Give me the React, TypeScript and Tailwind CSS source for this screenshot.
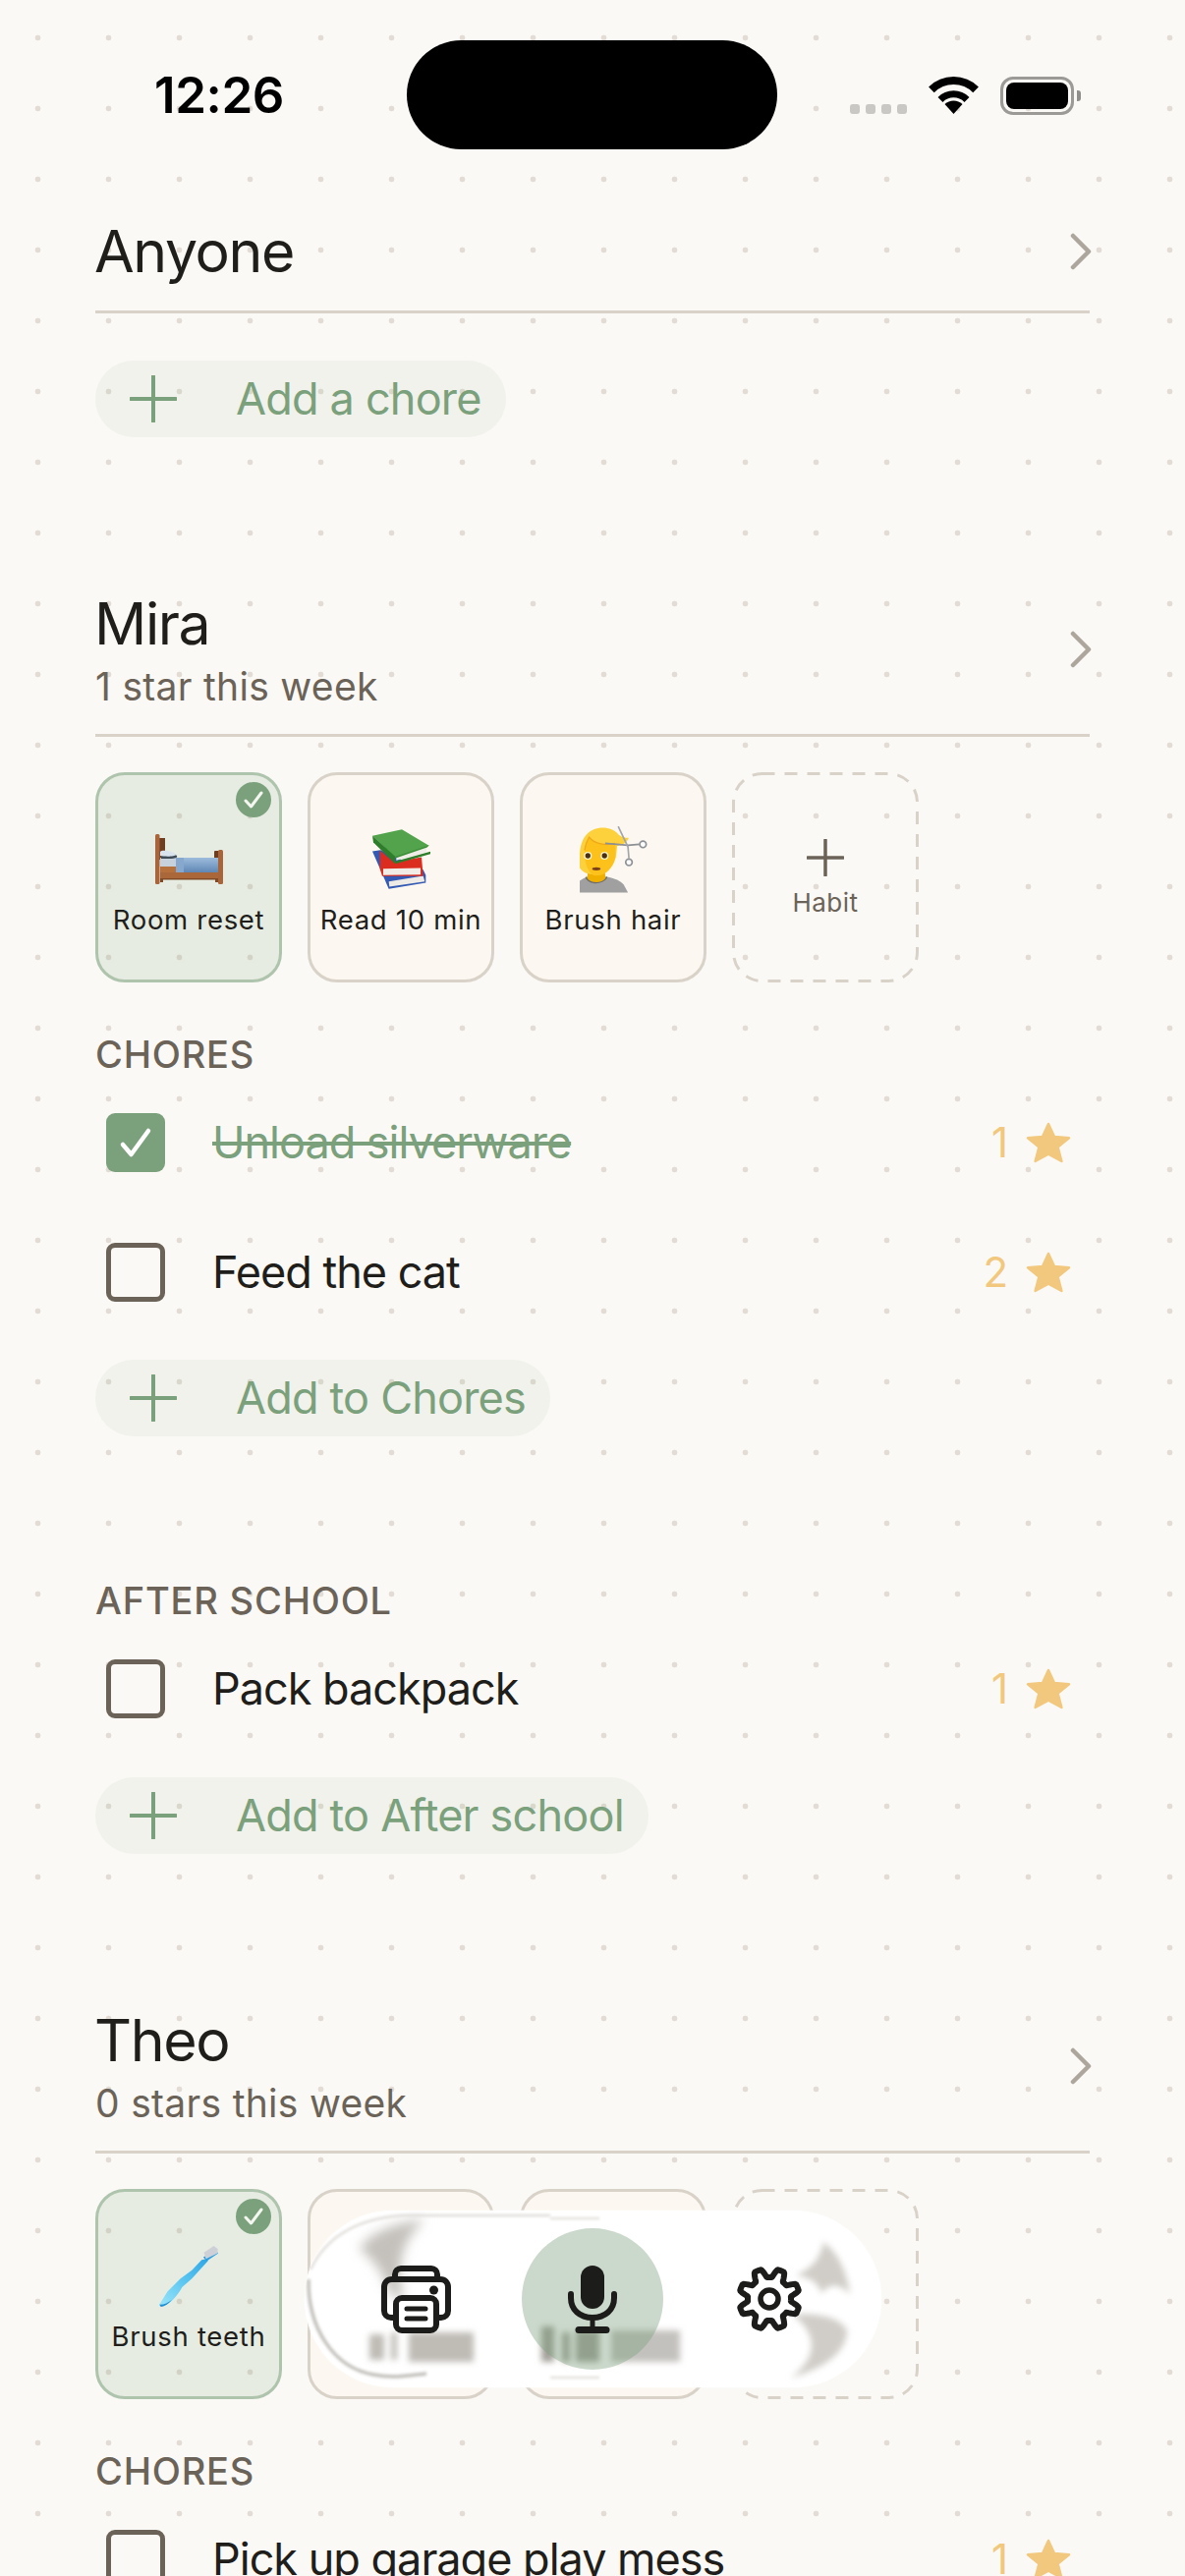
import React from "react";

const gearPath = (() => {
  const pts: string[] = [];
  const n = 240;
  for (let i = 0; i <= n; i++) {
    const t = (i / n) * Math.PI * 2;
    const c = Math.cos(8 * t + Math.PI);
    const s = Math.max(-1, Math.min(1, c * 1.7));
    const r = 26.5 + 4.5 * s;
    pts.push(`${(34 + r * Math.sin(t)).toFixed(2)} ${(34 - r * Math.cos(t)).toFixed(2)}`);
  }
  return "M" + pts.join("L") + "Z";
})();

function Plus({ size, stroke, color }: { size: number; stroke: number; color: string }) {
  return (
    <svg width={size} height={size} viewBox={`0 0 ${size} ${size}`} fill="none" className="shrink-0">
      <path d={`M${size / 2} 1V${size - 1}M1 ${size / 2}H${size - 1}`} stroke={color} strokeWidth={stroke} strokeLinecap="round" />
    </svg>
  );
}

function Chevron() {
  return (
    <svg width="24" height="38" viewBox="0 0 24 38" fill="none" className="mr-[-3px] shrink-0">
      <path d="M4 3L20 19L4 35" stroke="#aca69d" strokeWidth="4.5" strokeLinecap="round" strokeLinejoin="round" />
    </svg>
  );
}

function Star() {
  return (
    <svg width="46" height="42" viewBox="0 0 46 42" className="shrink-0">
      <path
        d="M23 2L29 15L44 16.2L32.6 25.6L36.4 40L23 32.6L9.6 40L13.4 25.6L2 16.2L17 15Z"
        fill="#f2c87e"
        stroke="#f2c87e"
        strokeWidth="2.5"
        strokeLinejoin="round"
      />
    </svg>
  );
}

function Bed() {
  return (
    <svg width="69" height="52" viewBox="0 0 69 52">
      <defs>
        <linearGradient id="blanket" x1="0" y1="0" x2="0" y2="1">
          <stop offset="0" stopColor="#9dbcdc" />
          <stop offset="1" stopColor="#5b84b2" />
        </linearGradient>
      </defs>
      <rect x="60" y="17" width="5" height="10" rx="1" fill="#6f3d20" />
      <rect x="4" y="4" width="6" height="22" fill="#6f3d20" />
      <rect x="5" y="24" width="17" height="9" fill="#c6d1dc" />
      <path d="M5 19C6 17 16 17 22 22C23 24 20 25 15 25H6Z" fill="#3f4b57" />
      <path d="M5 18C6 16 16 16 21 21C20 23 10 23 5 22Z" fill="#d8e3ee" />
      <rect x="5" y="33" width="17" height="7" fill="#b5703c" />
      <rect x="21" y="24" width="43" height="16" fill="url(#blanket)" />
      <rect x="21" y="24" width="8" height="16" fill="#86a8cd" />
      <rect x="5" y="39" width="60" height="6.5" fill="#a9673a" />
      <rect x="5" y="45" width="60" height="1.5" fill="#7f4a25" />
      <rect x="5" y="46" width="3" height="3" fill="#7f4a25" />
      <rect x="61" y="46" width="3" height="3" fill="#7f4a25" />
      <rect x="0" y="0" width="4.5" height="51" rx="1.5" fill="#a9643a" />
      <rect x="64" y="16" width="5" height="35" rx="1.5" fill="#a9643a" />
    </svg>
  );
}

function Books() {
  return (
    <svg width="60" height="62" viewBox="82 65 180 185">
      <path d="M85 132L110 128L240 188L248 205L248 228L135 247Z" fill="#3459b3" />
      <path d="M135 224L240 207L245 224L137 240Z" fill="#eeebe6" />
      <path d="M108 130L150 165L235 150L240 208L115 208L108 185Z" fill="#db2d1f" />
      <path d="M118 185L232 183L232 203L118 205Z" fill="#f1ece6" />
      <path d="M85 85L175 65L258 115L155 150Z" fill="#52a34c" />
      <path d="M85 85L155 148L155 170L88 105Z" fill="#2d7d2b" />
      <path d="M158 150L250 118L250 135L158 160Z" fill="#eeede6" />
      <path d="M155 163L262 133L262 140L155 170Z" fill="#2d7d2b" />
      <path d="M155 148L258 113L252 120L158 152Z" fill="#3b8f37" />
    </svg>
  );
}

function Person() {
  return (
    <svg width="69" height="68" viewBox="57 45 208 204">
      <path d="M57 248V212C66 204 78 200 90 198H130C160 202 184 212 192 224L205 248Z" fill="#a0a0a0" />
      <path d="M74 203C86 226 126 226 142 203L140 198C126 216 90 216 78 198Z" fill="#6d6d6d" />
      <path d="M82 178H134L136 204C124 220 92 220 80 204Z" fill="#efb000" />
      <path d="M57 172C54 120 58 72 100 54C125 44 160 48 176 70C186 78 196 80 207 80C204 92 192 102 172 105L168 140C160 165 140 190 108 194C84 192 66 188 57 172Z" fill="#fdd13c" />
      <path d="M72 118C74 100 80 88 86 78C102 100 140 104 165 97C169 118 168 138 162 155C152 180 130 196 108 196C86 196 70 160 72 118Z" fill="#fcc21b" />
      <path d="M72 118C74 100 80 88 86 78C102 100 140 104 165 97" fill="none" stroke="#f0a818" strokeWidth="4" />
      <circle cx="82" cy="135" r="12" fill="#fff6cf" />
      <circle cx="133" cy="135" r="12" fill="#fff6cf" />
      <circle cx="82" cy="135" r="8" fill="#4a2f14" />
      <circle cx="133" cy="135" r="8" fill="#4a2f14" />
      <ellipse cx="108" cy="175" rx="13" ry="5" fill="#7b3f1d" />
      <path d="M135 97L205 103L240 100" stroke="#8d9094" strokeWidth="5" fill="none" />
      <path d="M175 45L205 108L208 143" stroke="#a2a5a9" strokeWidth="5" fill="none" />
      <circle cx="251" cy="100" r="10" fill="#fff" stroke="#8d9094" strokeWidth="5" />
      <circle cx="208" cy="155" r="10" fill="#fff" stroke="#8d9094" strokeWidth="5" />
    </svg>
  );
}

function Brush() {
  return (
    <svg width="60" height="62" viewBox="95 135 180 187">
      <defs>
        <linearGradient id="brush" x1="0" y1="1" x2="1" y2="0">
          <stop offset="0" stopColor="#9be6fa" />
          <stop offset="0.55" stopColor="#58c4f0" />
          <stop offset="1" stopColor="#2ea6e6" />
        </linearGradient>
      </defs>
      <path d="M240 175L225 178L195 210L160 235L120 275L95 315L100 322C125 318 150 290 165 262L195 235L245 180Z" fill="url(#brush)" />
      <path d="M95 315L100 322C112 320 124 312 134 300C122 310 108 316 95 315Z" fill="#1d8fd4" />
      <path d="M230 170L270 148L275 158L240 182Z" fill="#2b9fe2" />
      <path d="M232 155L262 135L275 145L272 158L238 175Z" fill="#cdd1d7" />
    </svg>
  );
}

function Chip({ label, icon, done }: { label?: string; icon?: React.ReactNode; done?: boolean }) {
  return (
    <div
      className={
        "relative flex h-[214px] w-[190px] flex-col items-center rounded-[30px] border-[3px] " +
        (done ? "border-[#aec4ad] bg-[#7ba07c]/15" : "border-[#d9d2c9] bg-[#fcf8f1]")
      }
    >
      {done && (
        <div className="absolute right-[8px] top-[7px] flex h-[36px] w-[36px] items-center justify-center rounded-full bg-[#7ba07c]">
          <svg width="22" height="20" viewBox="0 0 22 20" fill="none">
            <path d="M3 11L8.5 17L19 3" stroke="#f4f6f0" strokeWidth="3" strokeLinecap="round" strokeLinejoin="round" />
          </svg>
        </div>
      )}
      <div className="mt-[52px] flex h-[68px] items-center justify-center">{icon}</div>
      {label && <div className="mt-[9px] text-[27.5px] leading-[36px] font-normal tracking-[0.7px] text-[#1f1e1b]">{label}</div>}
    </div>
  );
}

function AddChip() {
  return (
    <div className="relative flex h-[214px] w-[190px] flex-col items-center">
      <svg className="absolute inset-0" width="190" height="214" fill="none">
        <rect x="1.5" y="1.5" width="187" height="211" rx="29" stroke="#d9d2c9" strokeWidth="3" strokeDasharray="13 10" />
      </svg>
      <div className="mt-[68px]">
        <Plus size={38} stroke={3.5} color="#6b6358" />
      </div>
      <div className="mt-[9px] text-[26px] leading-[36px] tracking-[0.5px] text-[#6b6358]">Habit</div>
    </div>
  );
}

function Row({ text, stars, done }: { text: string; stars: number; done?: boolean }) {
  return (
    <div className="flex h-[132px] items-center pl-[11px] pr-[19px]">
      {done ? (
        <div className="flex h-[60px] w-[60px] shrink-0 items-center justify-center rounded-[9px] bg-[#7ba07c]">
          <svg width="34" height="32" viewBox="0 0 34 32" fill="none">
            <path d="M4 18L12.5 28L30 4" stroke="#fff" strokeWidth="4.5" strokeLinecap="round" strokeLinejoin="round" />
          </svg>
        </div>
      ) : (
        <div className="h-[60px] w-[60px] shrink-0 rounded-[9px] border-[5px] border-[#6b6358]" />
      )}
      <div className={"ml-[48px] flex-1 text-[45px] leading-[56px] tracking-[-1px] " + (done ? "text-[#7ba07c] line-through" : "text-[#1f1e1b]")}>{text}</div>
      <div className="flex items-center gap-[18px] text-[42px] leading-[56px] text-[#f2c87e]">
        <span>{stars}</span>
        <Star />
      </div>
    </div>
  );
}

function Pill({ label }: { label: string }) {
  return (
    <div className="flex h-[78px] w-fit items-center rounded-full bg-[#7ba07c]/8 pl-[35px] pr-[25px]">
      <Plus size={48} stroke={4} color="#7ba07c" />
      <span className="ml-[60px] text-[45px] leading-[56px] tracking-[-0.8px] text-[#7ba07c]">{label}</span>
    </div>
  );
}

function Header({ name, sub }: { name: string; sub?: string }) {
  return (
    <div className="flex items-center justify-between border-b-[3px] border-[#d9d2c9] pb-[24px]">
      <div>
        <div className="ml-[-1px] text-[59px] leading-[72px] tracking-[-1.4px] text-[#1f1e1b]">{name}</div>
        {sub && <div className="mt-[4px] text-[39px] leading-[48px] tracking-[0.3px] text-[#6b6358]">{sub}</div>}
      </div>
      <Chevron />
    </div>
  );
}

function Heading({ children, top }: { children: React.ReactNode; top: string }) {
  return <div className={top + " text-[38px] leading-[48px] font-medium tracking-[0.8px] text-[#6b6358]"}>{children}</div>;
}

function StatusBar() {
  return (
    <div className="relative h-[220px]">
      <div className="absolute left-[157px] top-[66px] text-[51px] leading-[62px] font-semibold tracking-[-0.4px] text-black">12:26</div>
      <div className="absolute left-[414px] top-[41px] h-[111px] w-[377px] rounded-[56px] bg-black" />
      <div className="absolute left-[865px] top-[106px] flex gap-[6px]">
        <div className="h-[10px] w-[10px] rounded-[3px] bg-[#c9c8c4]" />
        <div className="h-[10px] w-[10px] rounded-[3px] bg-[#c9c8c4]" />
        <div className="h-[10px] w-[10px] rounded-[3px] bg-[#c9c8c4]" />
        <div className="h-[10px] w-[10px] rounded-[3px] bg-[#c9c8c4]" />
      </div>
      <svg className="absolute left-[945px] top-[78px]" width="51" height="38" viewBox="0 0 51 38" fill="none">
        <path d="M2.9 13.4A32 32 0 0 1 48.1 13.4" stroke="#000" strokeWidth="8" />
        <path d="M12 23.5A19 19 0 0 1 39 23.5" stroke="#000" strokeWidth="7" />
        <path d="M25.5 38L16.5 28A13 13 0 0 1 34.5 28Z" fill="#000" />
      </svg>
      <div className="absolute left-[1018px] top-[78px] flex h-[39px] w-[75px] items-center justify-center rounded-[13px] border-[3px] border-[#9b9a96]">
        <div className="h-[27px] w-[63px] rounded-[8px] bg-black" />
      </div>
      <div className="absolute left-[1096px] top-[92px] h-[11px] w-[4px] rounded-r-[3px] bg-[#8f8e8a]" />
    </div>
  );
}

function Toolbar() {
  return (
    <div className="absolute left-[310px] top-[2250px] h-[180px] w-[587px] overflow-hidden rounded-[90px] bg-white shadow-[0_0_2px_rgba(255,255,255,1)]">
      <svg className="absolute inset-0" width="587" height="180" viewBox="0 0 587 180" fill="none">
        <defs>
          <filter id="b6" x="-40%" y="-40%" width="180%" height="180%">
            <feGaussianBlur stdDeviation="6" />
          </filter>
          <filter id="b3" x="-40%" y="-40%" width="180%" height="180%">
            <feGaussianBlur stdDeviation="3" />
          </filter>
          <filter id="b2" x="-20%" y="-20%" width="140%" height="140%">
            <feGaussianBlur stdDeviation="1.6" />
          </filter>
        </defs>
        <path d="M122 9C95 12 70 20 56 38C66 48 78 58 84 78C92 92 98 92 100 86C94 60 96 34 122 9Z" fill="#c4c1bc" filter="url(#b6)" />
        <path d="M4 70C3 120 30 160 70 167C90 171 105 168 124 166" stroke="#c2c0bb" strokeWidth="3.5" filter="url(#b2)" />
        <path d="M6 60C20 30 50 8 100 5H250" stroke="#d9d6d0" strokeWidth="2" filter="url(#b2)" />
        <g fill="#bfbcb6" filter="url(#b3)">
          <rect x="66" y="126" width="15" height="26" />
          <rect x="88" y="124" width="6" height="28" />
          <rect x="106" y="124" width="66" height="30" />
        </g>
        <g fill="#a3a099" filter="url(#b3)">
          <rect x="241" y="118" width="13" height="36" />
          <rect x="262" y="124" width="8" height="30" />
          <rect x="276" y="122" width="24" height="32" />
          <rect x="312" y="122" width="70" height="32" opacity="0.65" />
        </g>
        <path d="M555 85C552 65 545 45 528 32C525 48 518 58 500 66C514 68 522 72 526 84C536 72 546 76 555 85Z" fill="#d0cdc8" filter="url(#b3)" />
        <path d="M497 106C520 104 545 108 552 122C552 142 532 160 495 170C520 152 525 128 497 106Z" fill="#d0cdc8" filter="url(#b3)" />
        <path d="M250 170H300M250 8H300" stroke="#dedbd5" strokeWidth="2" filter="url(#b2)" />
      </svg>
      <div className="absolute left-[221px] top-[18px] h-[144px] w-[144px] rounded-full bg-[#7ba07c]/40" />
      <svg className="absolute left-[78px] top-[56px]" width="71" height="69" viewBox="0 0 71 69" fill="none">
        <path d="M14 14V9C14 5.5 17 3 20 3H51C54 3 57 5.5 57 9V14" stroke="#1c1c1a" strokeWidth="6" />
        <path d="M15 53H10C6 53 3 50 3 46V22C3 17.5 6 14 11 14H60C65 14 68 17.5 68 22V46C68 50 65 53 61 53H56" stroke="#1c1c1a" strokeWidth="6" />
        <rect x="15" y="33" width="41" height="33" rx="6" stroke="#1c1c1a" strokeWidth="6" fill="#fff" />
        <path d="M26 44H45M26 54H45" stroke="#1c1c1a" strokeWidth="5" strokeLinecap="round" />
        <circle cx="53.5" cy="25" r="4.5" fill="#1c1c1a" />
      </svg>
      <svg className="absolute left-[268px] top-[56px]" width="50" height="69" viewBox="0 0 50 69" fill="none">
        <rect x="13" y="0" width="24" height="44" rx="12" fill="#1c1c1a" />
        <path d="M3 29V33C3 45 12 53 25 53C38 53 47 45 47 33V29" stroke="#1c1c1a" strokeWidth="6" strokeLinecap="round" />
        <path d="M25 53V65" stroke="#1c1c1a" strokeWidth="5" />
        <path d="M11 65.5H39" stroke="#1c1c1a" strokeWidth="7" strokeLinecap="round" />
      </svg>
      <svg className="absolute left-[439px] top-[56px]" width="68" height="68" viewBox="0 0 68 68" fill="none">
        <path d={gearPath} stroke="#1c1c1a" strokeWidth="6" strokeLinejoin="round" />
        <circle cx="34" cy="34" r="9" stroke="#1c1c1a" strokeWidth="5.5" />
      </svg>
    </div>
  );
}

export default function App() {
  return (
    <div className="relative h-[2622px] w-[1206px] overflow-hidden bg-[#faf9f5] bg-[radial-gradient(circle_at_38.5px_38.5px,#e2dcd4_2.6px,transparent_3.2px)] bg-[size:72px_72px] font-['Inter',sans-serif]">
      <StatusBar />
      <div className="px-[97px]">
        <Header name="Anyone" />
        <div className="mt-[48px]">
          <Pill label="Add a chore" />
        </div>

        <div className="mt-[154px]">
          <Header name="Mira" sub="1 star this week" />
        </div>
        <div className="mt-[36px] flex gap-[26px]">
          <Chip label="Room reset" icon={<Bed />} done />
          <Chip label="Read 10 min" icon={<Books />} />
          <Chip label="Brush hair" icon={<Person />} />
          <AddChip />
        </div>
        <Heading top="mt-[49px]">CHORES</Heading>
        <Row text="Unload silverware" stars={1} done />
        <Row text="Feed the cat" stars={2} />
        <div className="mt-[23px]">
          <Pill label="Add to Chores" />
        </div>
        <Heading top="mt-[143px]">AFTER SCHOOL</Heading>
        <Row text="Pack backpack" stars={1} />
        <div className="mt-[24px]">
          <Pill label="Add to After school" />
        </div>

        <div className="mt-[154px]">
          <Header name="Theo" sub="0 stars this week" />
        </div>
        <div className="mt-[36px] flex gap-[26px]">
          <Chip label="Brush teeth" icon={<Brush />} done />
          <Chip />
          <Chip />
          <AddChip />
        </div>
        <Heading top="mt-[49px]">CHORES</Heading>
        <Row text="Pick up garage play mess" stars={1} />
      </div>
      <Toolbar />
    </div>
  );
}
